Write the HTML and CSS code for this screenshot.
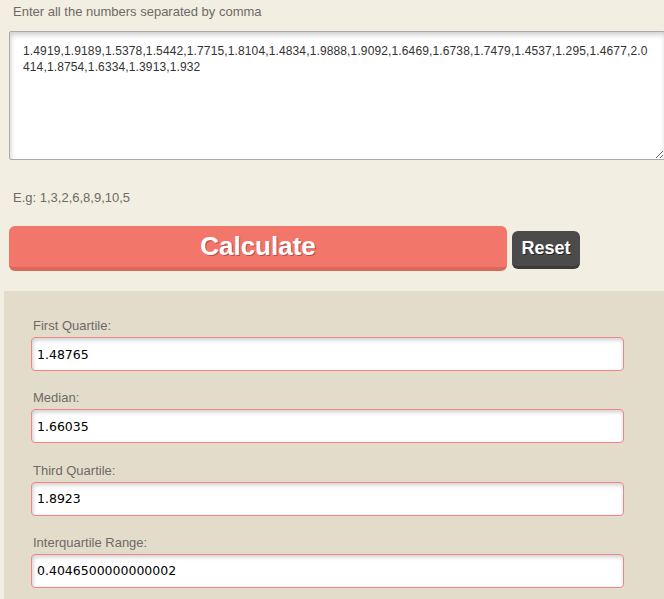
FILE: index.html
```html
<!DOCTYPE html>
<html>
<head>
<meta charset="utf-8">
<link rel="stylesheet" href="styles.css">
</head>
<body>
<div class="page">
  <div class="intro">Enter all the numbers separated by comma</div>
  <textarea class="numbers">1.4919,1.9189,1.5378,1.5442,1.7715,1.8104,1.4834,1.9888,1.9092,1.6469,1.6738,1.7479,1.4537,1.295,1.4677,2.0414,1.8754,1.6334,1.3913,1.932</textarea>
  <div class="example">E.g: 1,3,2,6,8,9,10,5</div>
  <div class="actions">
    <button class="btn-calc">Calculate</button>
    <button class="btn-reset">Reset</button>
  </div>
  <div class="results">
    <div class="field">
      <label class="field-label">First Quartile:</label>
      <input class="field-input" type="text" value="1.48765">
    </div>
    <div class="field">
      <label class="field-label">Median:</label>
      <input class="field-input" type="text" value="1.66035">
    </div>
    <div class="field">
      <label class="field-label">Third Quartile:</label>
      <input class="field-input" type="text" value="1.8923">
    </div>
    <div class="field">
      <label class="field-label">Interquartile Range:</label>
      <input class="field-input" type="text" value="0.4046500000000002">
    </div>
  </div>
</div>
</body>
</html>
```
FILE: styles.css
```css
html, body {
  margin: 0;
  padding: 0;
  background: #f2eee2;
  overflow: hidden;
}
.page {
  width: 664px;
  height: 599px;
  font-family: "Liberation Sans", Arial, sans-serif;
  display: flex;
  flex-direction: column;
}
.intro {
  font-size: 13px;
  line-height: 14px;
  color: #6e6a66;
  padding: 5px 0 0 13px;
  height: 31px;
  flex: none;
  box-sizing: border-box;
}
.numbers {
  display: block;
  flex: none;
  margin: 0 0 0 9px;
  width: 656px;
  height: 129px;
  box-sizing: border-box;
  border: 1px solid #aaa;
  border-radius: 2px;
  background: #fff;
  box-shadow: inset 1px 3px 5px rgba(0,0,0,0.18);
  padding: 11px 14px 0 13px;
  font-family: "Liberation Sans", Arial, sans-serif;
  font-size: 12px;
  line-height: 16px;
  letter-spacing: 0.13px;
  color: #333;
  resize: both;
  outline: none;
}
.example {
  flex: none;
  font-size: 13px;
  line-height: 14px;
  color: #6e6a66;
  padding: 31px 0 0 13px;
  height: 66px;
  box-sizing: border-box;
}
.actions {
  flex: none;
  display: flex;
  align-items: flex-start;
  padding-left: 9px;
  height: 65px;
  box-sizing: border-box;
}
.btn-calc {
  width: 498px;
  height: 45px;
  margin: 0;
  border: none;
  border-bottom: 4px solid #da695d;
  border-radius: 6px;
  background: #f27669;
  color: #fff;
  font-family: "Liberation Sans", Arial, sans-serif;
  font-weight: bold;
  font-size: 26px;
  line-height: 41px;
  padding: 0;
  text-shadow: 1px 1px 0 rgba(140, 40, 40, 0.55);
}
.btn-reset {
  margin: 5px 0 0 5px;
  width: 68px;
  height: 38px;
  border: none;
  border-bottom: 3px solid #3b3b3b;
  border-radius: 6px;
  background: #4b4b4b;
  color: #fff;
  font-family: "Liberation Sans", Arial, sans-serif;
  font-weight: bold;
  font-size: 18px;
  line-height: 35px;
  padding: 0;
  text-shadow: 1px 1px 0 rgba(0,0,0,0.5);
}
.results {
  flex: 1;
  margin-left: 4px;
  background: #e3dccb;
  padding: 28px 0 0 27px;
}
.field {
  display: flex;
  flex-direction: column;
  align-items: flex-start;
  margin-bottom: 20.33px;
}
.field-label {
  font-size: 13px;
  line-height: 14px;
  color: #6e6a66;
  margin: 0 0 4px 2px;
}
.field-input {
  width: 593px;
  height: 34px;
  box-sizing: border-box;
  border: 1px solid #ef8585;
  border-radius: 4px;
  background: #fff;
  box-shadow: inset 1px 2px 4px rgba(0,0,0,0.2);
  padding: 0 5px;
  margin: 0;
  font-family: "DejaVu Sans", Verdana, sans-serif;
  font-size: 12.5px;
  color: #000;
  outline: none;
}
```
